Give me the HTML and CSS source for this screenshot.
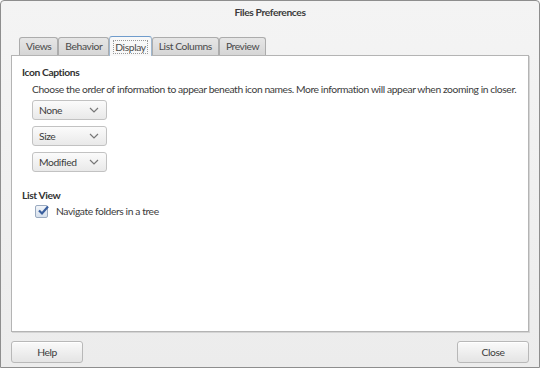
FILE: index.html
```html
<!DOCTYPE html>
<html lang="en">
<head>
  <meta charset="UTF-8">
  <title>Files Preferences</title>
  <link rel="stylesheet" href="styles.css">
</head>
<body>
  <div class="window">
    <div class="titlebar">Files Preferences</div>
    <div class="notebook">
      <div class="tabs">
        <div class="tab">Views</div>
        <div class="tab">Behavior</div>
        <div class="tab active"><span class="focus">Display</span></div>
        <div class="tab">List Columns</div>
        <div class="tab">Preview</div>
      </div>
      <div class="page">
        <div class="section-title">Icon Captions</div>
        <div class="section-body">
          <p class="desc">Choose the order of information to appear beneath icon names. More information will appear when zooming in closer.</p>
          <div class="combo"><span>None</span><svg width="10" height="6" viewBox="0 0 10 6"><path d="M1 1 L5 5 L9 1" fill="none" stroke="#777" stroke-width="1.2"/></svg></div>
          <div class="combo"><span>Size</span><svg width="10" height="6" viewBox="0 0 10 6"><path d="M1 1 L5 5 L9 1" fill="none" stroke="#777" stroke-width="1.2"/></svg></div>
          <div class="combo"><span>Modified</span><svg width="10" height="6" viewBox="0 0 10 6"><path d="M1 1 L5 5 L9 1" fill="none" stroke="#777" stroke-width="1.2"/></svg></div>
        </div>
        <div class="section-title list-view">List View</div>
        <div class="section-body">
          <label class="check">
            <span class="box"><svg width="12" height="11" viewBox="0 0 12 11"><path d="M2 5.5 L5 8.5 L11 1.5" fill="none" stroke="#3a5f9e" stroke-width="2.2"/></svg></span>
            Navigate folders in a tree
          </label>
        </div>
      </div>
    </div>
    <div class="footer">
      <button class="btn">Help</button>
      <button class="btn">Close</button>
    </div>
  </div>
</body>
</html>
```

FILE: styles.css
```css
body {
  margin: 0;
  font-family: Lato, "DejaVu Sans", sans-serif;
  font-size: 10.3px;
  letter-spacing: -0.4px;
  color: #3c3c3c;
}
.window {
  width: 540px;
  height: 368px;
  box-sizing: border-box;
  border: 1px solid #8e8e8e;
  border-radius: 4px 4px 0 0;
  background: linear-gradient(to bottom, #f4f4f4, #ececec);
  display: flex;
  flex-direction: column;
}
.titlebar {
  height: 23px;
  line-height: 23px;
  text-align: center;
  font-weight: bold;
  color: #3c3c3c;
}
.notebook {
  margin: 12px 10px 0 10px;
}
.tabs {
  display: flex;
  align-items: flex-end;
  padding-left: 8px;
  height: 19px;
}
.tab {
  height: 17px;
  line-height: 17px;
  padding: 0 6px;
  border: 1px solid #acacac;
  border-bottom: none;
  border-radius: 3px 3px 0 0;
  background: linear-gradient(to bottom, #e6e6e6, #d6d6d6);
  color: #4a4a4a;
}
.tab.active {
  height: 19px;
  line-height: 20px;
  background: #f8f8f8;
  border-color: #a0b8d0;
  border-top: 1px solid #6f9ccc;
  position: relative;
  top: 1px;
  padding: 0 3px;
}
.focus {
  border: 1px dotted #999;
  padding: 0 1px;
}
.page {
  height: 267px;
  background: #fff;
  border: 1px solid #b4b4b4;
  box-shadow: 1px 1px 0 #d4d4d4;
  padding: 8px 10px 0 10px;
}
.section-title {
  font-weight: bold;
  height: 16px;
  line-height: 16px;
  color: #333;
}
.list-view {
  margin-top: 15px;
}
.section-body {
  padding-left: 10px;
}
.desc {
  margin: 2px 0 3px 0;
  line-height: 15px;
  white-space: nowrap;
}
.combo {
  width: 75px;
  height: 20px;
  box-sizing: border-box;
  border: 1px solid #c2c2c2;
  border-radius: 3px;
  background: linear-gradient(to bottom, #fbfbfb, #e9e9e9);
  display: flex;
  align-items: center;
  justify-content: space-between;
  padding: 0 7px 0 6px;
  margin-bottom: 6px;
  color: #3c3c3c;
}
.check {
  display: flex;
  align-items: center;
  gap: 8px;
  height: 16px;
  padding-left: 3px;
}
.box {
  width: 11px;
  height: 11px;
  border: 1px solid #9aaac0;
  border-radius: 2px;
  background: linear-gradient(to bottom, #f2f5f9, #d6e0ec);
  position: relative;
}
.box svg {
  position: absolute;
  left: 1px;
  top: -1px;
}
.footer {
  display: flex;
  justify-content: space-between;
  padding: 9px 10px 0 10px;
}
.btn {
  width: 72px;
  height: 22px;
  border: 1px solid #b8b8b8;
  border-radius: 3px;
  background: linear-gradient(to bottom, #fafafa, #e4e4e4);
  font-family: Lato, "DejaVu Sans", sans-serif;
  font-size: 10.3px;
  letter-spacing: -0.4px;
  color: #3c3c3c;
  box-shadow: 0 1px 0 #fff inset;
}
```
